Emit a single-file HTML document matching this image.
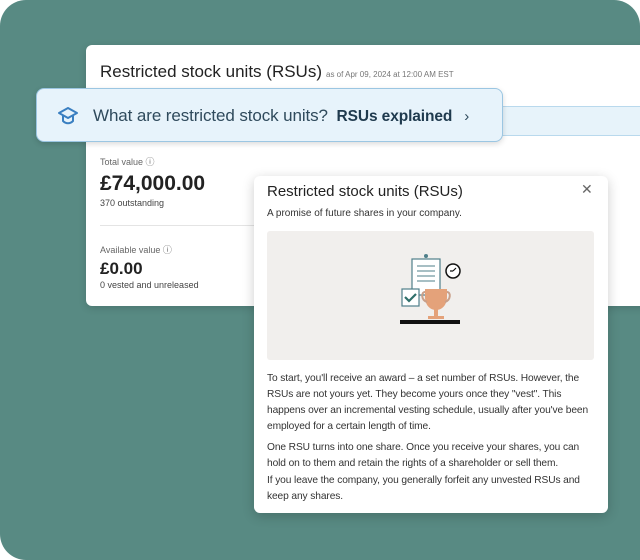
<!DOCTYPE html>
<html><head><meta charset="utf-8"><style>
*{margin:0;padding:0;box-sizing:border-box}
body{width:640px;height:560px;background:#fff;overflow:hidden;font-family:"Liberation Sans","DejaVu Sans",sans-serif;position:relative}
.bg{position:absolute;left:0;top:0;width:640px;height:560px;background:#588a83;border-radius:26px 26px 0 26px}
.card{position:absolute;left:86px;top:45px;width:570px;height:261px;background:#fff;border-radius:6px;box-shadow:0 2px 8px rgba(0,0,0,.15)}
.t1{position:absolute;left:100px;top:62px;font-size:17px;color:#222}
.t1 small{font-size:8px;color:#777;margin-left:4px}
.strip{position:absolute;left:86px;top:106px;width:560px;height:30px;background:#e7f3fa;border-top:1px solid #b9d9ed;border-bottom:1px solid #b9d9ed}
.banner{position:absolute;left:36px;top:88px;width:467px;height:54px;background:#e7f3fb;border:1px solid #9bc6e2;border-radius:8px;box-shadow:0 2px 6px rgba(0,0,0,.15)}
.banner .q{position:absolute;left:56px;top:17px;font-size:17px;color:#2f4a5c;white-space:nowrap;letter-spacing:-0.1px}
.banner b{margin-left:4px;color:#1f3a4e;font-size:15.5px}
.lbl{position:absolute;left:100px;font-size:9px;color:#666}
.big{position:absolute;left:100px;font-weight:bold;color:#222}
.sub{position:absolute;left:100px;font-size:9px;color:#444}
.hr{position:absolute;left:100px;top:225px;width:160px;height:1px;background:#e4e4e4}
.modal{position:absolute;left:254px;top:176px;width:354px;height:337px;background:#fff;border-radius:6px;box-shadow:0 3px 12px rgba(0,0,0,.2)}
.mt{position:absolute;left:13px;top:7px;font-size:15px;color:#222}
.x{position:absolute;left:327px;top:5px;font-size:14px;color:#666}
.ms{position:absolute;left:13px;top:32px;font-size:10px;color:#333}
.img{position:absolute;left:13px;top:55px;width:327px;height:129px;background:#f1efed;border-radius:3px}
.p{position:absolute;left:13px;font-size:10.2px;line-height:16px;color:#333;letter-spacing:-0.1px;white-space:nowrap}
</style></head><body>
<div class="bg"></div>
<div class="card"></div>
<div class="t1">Restricted stock units (RSUs)<small>as of Apr 09, 2024 at 12:00 AM EST</small></div>
<div class="strip"></div>
<div class="banner">
<svg style="position:absolute;left:20px;top:17px" width="22" height="20" viewBox="0 0 22 20" fill="none" stroke="#3a7fc1" stroke-width="2" stroke-linejoin="round"><path d="M2 7 11 2 20 7 11 12Z"/><path d="M6 9v6c3 3 7 3 10 0V9"/></svg>
<div class="q">What are restricted stock units? <b>RSUs explained</b><span style="margin-left:12px;font-size:15px">›</span></div>
</div>
<div class="lbl" style="top:155px">Total value ⓘ</div>
<div class="big" style="top:172px;font-size:21px">£74,000.00</div>
<div class="sub" style="top:198px">370 outstanding</div>
<div class="hr"></div>
<div class="lbl" style="top:243px">Available value ⓘ</div>
<div class="big" style="top:259px;font-size:17px">£0.00</div>
<div class="sub" style="top:280px">0 vested and unreleased</div>
<div class="modal">
<div class="mt">Restricted stock units (RSUs)</div>
<div class="x">✕</div>
<div class="ms">A promise of future shares in your company.</div>
<div class="img">
<svg style="position:absolute;left:130px;top:20px" width="70" height="80" viewBox="0 0 70 80">
<rect x="15" y="8" width="28" height="36" fill="#fff" stroke="#4f7f8a" stroke-width="1.2"/>
<circle cx="29" cy="5" r="2" fill="#4f7f8a"/>
<path d="M20 15h18M20 20h18M20 25h18M20 30h18" stroke="#4f7f8a" stroke-width="1"/>
<circle cx="56" cy="20" r="7" fill="#fff" stroke="#111" stroke-width="1.5"/>
<path d="M56 20l3-3M56 20h-3" stroke="#111" stroke-width="1.2"/>
<rect x="5" y="38" width="17" height="17" fill="#fff" stroke="#4f7f8a" stroke-width="1.2"/>
<path d="M8 46l4 4 7-7" stroke="#2f6f6a" stroke-width="2.2" fill="none"/>
<path d="M28 38h22v8c0 8-5 13-11 13s-11-5-11-13z" fill="#e4a27a"/>
<path d="M28 41c-4 0-4 8 2 10M50 41c4 0 4 8-2 10" stroke="#c9a08a" stroke-width="2" fill="none"/>
<rect x="37" y="58" width="4" height="8" fill="#e4a27a"/><rect x="31" y="65" width="16" height="3" fill="#e4a27a"/>
<rect x="3" y="69" width="60" height="4" fill="#111"/>
</svg>
</div>
<div class="p" style="top:195px">To start, you'll receive an award – a set number of RSUs. However, the<br>RSUs are not yours yet. They become yours once they "vest". This<br>happens over an incremental vesting schedule, usually after you've been<br>employed for a certain length of time.</div>
<div class="p" style="top:264px">One RSU turns into one share. Once you receive your shares, you can<br>hold on to them and retain the rights of a shareholder or sell them.</div>
<div class="p" style="top:297px">If you leave the company, you generally forfeit any unvested RSUs and<br>keep any shares.</div>
</div>
</body></html>
